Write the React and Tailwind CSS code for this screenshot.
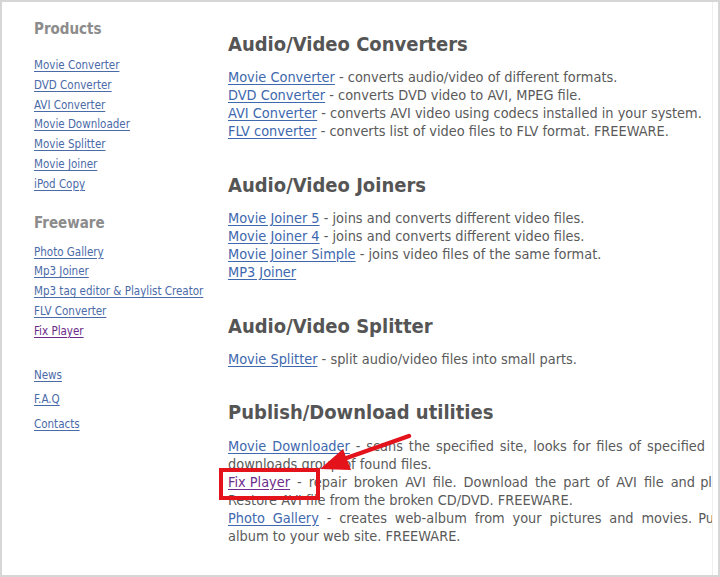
const sideFont = "font-['DejaVu_Sans_Condensed','DejaVu_Sans',sans-serif]";

const products = [
  'Movie Converter',
  'DVD Converter',
  'AVI Converter',
  'Movie Downloader',
  'Movie Splitter',
  'Movie Joiner',
  'iPod Copy',
];

const freeware = [
  { name: 'Photo Gallery' },
  { name: 'Mp3 Joiner' },
  { name: 'Mp3 tag editor & Playlist Creator' },
  { name: 'FLV Converter' },
  { name: 'Fix Player', visited: true },
];

const extra = ['News', 'F.A.Q', 'Contacts'];

const sections = [
  {
    title: 'Audio/Video Converters',
    items: [
      ['Movie Converter', 'converts audio/video of different formats.'],
      ['DVD Converter', 'converts DVD video to AVI, MPEG file.'],
      ['AVI Converter', 'converts AVI video using codecs installed in your system.'],
      ['FLV converter', 'converts list of video files to FLV format. FREEWARE.'],
    ],
  },
  {
    title: 'Audio/Video Joiners',
    items: [
      ['Movie Joiner 5', 'joins and converts different video files.'],
      ['Movie Joiner 4', 'joins and converts different video files.'],
      ['Movie Joiner Simple', 'joins video files of the same format.'],
      ['MP3 Joiner', null],
    ],
  },
  {
    title: 'Audio/Video Splitter',
    items: [['Movie Splitter', 'split audio/video files into small parts.']],
  },
];

function SideLink({ children, visited }) {
  return (
    <a
      href="#"
      className={`underline underline-offset-2 ${visited ? 'text-[#6a2a86]' : 'text-[#4a6aa8]'}`}
    >
      {children}
    </a>
  );
}

function Link({ children, visited, className = '' }) {
  return (
    <a
      href="#"
      className={`underline underline-offset-2 ${visited ? 'text-[#6e2d8c]' : 'text-[#4068ae]'} ${className}`}
    >
      {children}
    </a>
  );
}

function Sidebar() {
  return (
    <div className={`w-[226px] shrink-0 pl-[32px] pt-[18px] ${sideFont}`}>
      <p className="text-[15px] leading-[18px] font-bold text-[#8c8c8c]">Products</p>
      <ul className="mt-[18px] text-[11.5px] leading-[19.8px]">
        {products.map((p) => (
          <li key={p}><SideLink>{p}</SideLink></li>
        ))}
      </ul>

      <p className="mt-[19px] text-[15px] leading-[18px] font-bold text-[#8c8c8c]">Freeware</p>
      <ul className="mt-[11px] text-[11.5px] leading-[19.8px]">
        {freeware.map((f) => (
          <li key={f.name}><SideLink visited={f.visited}>{f.name}</SideLink></li>
        ))}
      </ul>

      <ul className="mt-[21px] text-[11.5px] leading-[24.5px]">
        {extra.map((e) => (
          <li key={e}><SideLink>{e}</SideLink></li>
        ))}
      </ul>
    </div>
  );
}

function Content() {
  return (
    <div className={`flex-1 min-w-0 mr-[5px] overflow-hidden border-r border-[#efefef] pt-[30px] text-[14.4px] leading-[18px] text-[#5a5a5a] ${sideFont}`}>
      {sections.map((s, i) => (
        <div key={s.title} className={i === 0 ? '' : 'mt-[33px]'}>
          <h2 className="text-[20px] leading-[24px] font-bold text-[#555555]">{s.title}</h2>
          <div className="mt-[12px]">
            {s.items.map(([name, desc]) => (
              <div key={name}>
                <Link>{name}</Link>
                {desc && <> - {desc}</>}
              </div>
            ))}
          </div>
        </div>
      ))}

      <div className="mt-[32px]">
        <h2 className="text-[20px] leading-[24px] font-bold text-[#555555]">Publish/Download utilities</h2>
        {/* justified paragraph, runs past the right edge */}
        <div className="mt-[13px] whitespace-nowrap">
          <div>
            <span className="inline-block w-[477px] text-justify [text-align-last:justify]">
              <Link>Movie Downloader</Link> - scans the specified site, looks for files of specified
            </span>{' '}
            <span className="ml-[4px]">type and</span>
          </div>
          <div>downloads group of found files.</div>
          <div>
            <span className="inline-block w-[467px] text-justify [text-align-last:justify]">
              <Link visited className="inline-block">Fix Player</Link> - repair broken AVI file. Download the part of AVI file and
            </span>{' '}
            <span className="ml-[1px]">play it.</span>
          </div>
          <div>Restore AVI file from the broken CD/DVD. FREEWARE.</div>
          <div>
            <span className="inline-block w-[464px] text-justify [text-align-last:justify]">
              <Link>Photo Gallery</Link> - creates web-album from your pictures and movies.
            </span>{' '}
            <span className="ml-[2px]">Publish</span>
          </div>
          <div>album to your web site. FREEWARE.</div>
        </div>
      </div>
    </div>
  );
}

export default function App() {
  return (
    <div className="relative w-[720px] h-[577px] overflow-hidden bg-white border-2 border-[#d6d6d6]">
      <div className="flex h-full overflow-hidden">
        <Sidebar />
        <Content />
      </div>

      {/* annotation: red box + arrow */}
      <svg
        className="absolute left-0 top-0 pointer-events-none"
        width="720"
        height="577"
        viewBox="0 0 720 577"
      >
        <rect x="219" y="468" width="97" height="28" fill="none" stroke="#e3121b" strokeWidth="4" />
        <line x1="407" y1="434" x2="336" y2="459" stroke="#e3121b" strokeWidth="4.5" strokeLinecap="round" />
        <polygon points="318,467 341,447 349,468" fill="#e3121b" />
      </svg>
    </div>
  );
}
